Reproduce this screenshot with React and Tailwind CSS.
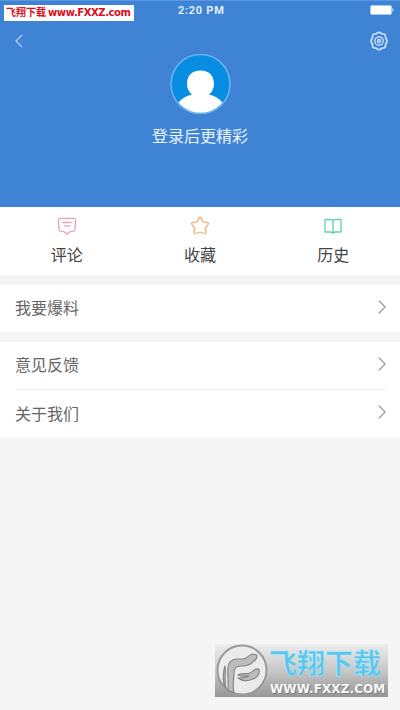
const TABS = [
  { label: '评论', icon: <CommentIcon /> },
  { label: '收藏', icon: <StarIcon /> },
  { label: '历史', icon: <BookIcon /> },
];

const MENU_GROUPS = [['我要爆料'], ['意见反馈', '关于我们']];

function CommentIcon() {
  return (
    <svg className="w-5 h-5" viewBox="0 0 20 20" fill="none" stroke="#eca0b5" strokeWidth="1.300" strokeLinejoin="round">
      <path d="M3.200 2.300h13.600a1.800 1.800 0 0 1 1.800 2L18 13.500q-.1 1.300-1.500 1.600L13 15.700 10 18 7 15.700l-3.500-.6Q2.100 14.800 2 13.500L1.400 4.300a1.800 1.800 0 0 1 1.800-2Z" />
      <path d="M5.500 6.500h9M7 9.800h6.500" />
    </svg>
  );
}

function StarIcon() {
  return (
    <svg className="w-5 h-5" viewBox="0 0 20 20" fill="none" stroke="#f5b273" strokeWidth="1.300" strokeLinejoin="round">
      <path d="M10 1.500Q10.700 1.500 11.200 2.500L12.900 5.800L17.500 6.700Q19.200 7.300 18 8.700L15.300 12L16 16.300Q16 18 14.300 17.500L10 16L5.700 17.500Q4 18 4 16.300L4.700 12L2 8.700Q.8 7.300 2.500 6.700L7.100 5.800L8.800 2.500Q9.300 1.500 10 1.500Z" />
    </svg>
  );
}

function BookIcon() {
  return (
    <svg className="w-5 h-5" viewBox="0 0 20 20" fill="none" stroke="#66d2aa" strokeWidth="1.300" strokeLinejoin="round">
      <path d="M10 4.700Q8.800 3.500 7 3.500H2V16h5.500q1.700 0 2.500 1 .8-1 2.500-1H18V3.500h-5q-1.800 0-3 1.200Z" />
      <path d="M10 4.700v13" />
    </svg>
  );
}

function GearIcon() {
  return (
    <svg className="w-[18px] h-5" viewBox="0 0 18 20" fill="none" stroke="#cfe5fb">
      <path
        strokeWidth="1.600"
        strokeLinejoin="round"
        d="M7 2.200q2-1.600 4 0l.9.700 1.600.1q2 .3 2 2.500l.1 1.500.8 1.200q1.200 1.800 0 3.600l-.8 1.200-.1 1.500q0 2.200-2 2.500l-1.600.1-.9.700q-2 1.600-4 0l-.9-.7-1.600-.1q-2-.3-2-2.500l-.1-1.500-.8-1.200q-1.200-1.800 0-3.600l.8-1.200.1-1.500q0-2.200 2-2.500l1.600-.1Z"
      />
      <circle cx="9" cy="10" r="4.200" strokeWidth="1.300" />
      <circle cx="9" cy="10" r="1.500" strokeWidth="1.500" />
    </svg>
  );
}

function Chevron() {
  return (
    <svg className="w-2 h-[14px]" viewBox="0 0 8 14" fill="none" stroke="#a3a3a3" strokeWidth="1.500">
      <path d="M1 .8 7 7 1 13.200" />
    </svg>
  );
}

function Avatar() {
  return (
    <svg className="w-[61px] h-[62px]" viewBox="0 0 61 62">
      <defs>
        <clipPath id="avatar">
          <circle cx="30.500" cy="31" r="30" />
        </clipPath>
      </defs>
      <circle cx="30.500" cy="31" r="29.500" fill="#078ee2" />
      <g clipPath="url(#avatar)" fill="#fff">
        <path d="M30.500 17.500c8.500 0 13.500 5 13.500 13.500 0 4.500-2 8-5 10.500 6 1.500 10 4 13 7.500v13H9V49c3-3.500 7-6 13-7.500-3-2.500-5-6-5-10.500 0-8.500 5-13.500 13.500-13.500Z" />
      </g>
      <circle cx="30.500" cy="31" r="29.500" fill="none" stroke="#69b1f1" strokeWidth="1.600" />
    </svg>
  );
}

function Header() {
  return (
    <header className="relative h-[207px] bg-[#3f83d5] text-white border-t border-[#5b97df]">
      {/* status bar */}
      <div className="relative h-5">
        <span className="absolute left-[178px] top-[2px] text-[11px] leading-4 font-semibold tracking-[0.750px] whitespace-nowrap text-[#eaf3fc]">
          2:20 PM
        </span>
        <div className="absolute right-[6px] top-1 flex items-center">
          <div className="w-[22px] h-[10px] rounded-[2px] bg-white border border-[#a8cbf2]" />
          <div className="w-[2px] h-1 rounded-r bg-[#8dbaec]" />
        </div>
        <div className="absolute left-1 top-1 w-[130px] h-4 bg-white flex items-center pl-[2px] text-[#d90d1b] font-bold whitespace-nowrap">
          <span className="w-[42px] text-[10px] leading-4">飞翔下载</span>
          <span className="font-['DejaVu_Sans','Noto_Sans_CJK_SC',sans-serif] text-[10px] leading-4 tracking-[-0.400px]">www.FXXZ.com</span>
        </div>
      </div>

      <div className="h-[32px] flex items-start justify-between pl-[15px] pr-3">
        <svg className="mt-[13px] w-2 h-[14px]" viewBox="0 0 8 14" fill="none" stroke="#b5d6f8" strokeWidth="1.200">
          <path d="M7 1 1 7l6 6" />
        </svg>
        <div className="mt-[10px]">
          <GearIcon />
        </div>
      </div>

      <div className="flex flex-col items-center">
        <Avatar />
        <p className="mt-[10px] text-[16px] leading-6 text-[#eaf4ff]">登录后更精彩</p>
      </div>
    </header>
  );
}

function MenuRow({ label, divided }) {
  return (
    <div className="bg-white pl-[15px] pr-[14px]">
      <div className={`flex items-center justify-between ${divided ? 'h-[49px] border-t border-[#f0f0f0]' : 'h-[47px]'}`}>
        <span className="pt-px text-[16px] leading-6 text-[#666666]">{label}</span>
        <div className="pb-1">
          <Chevron />
        </div>
      </div>
    </div>
  );
}

function DownloadBadge() {
  return (
    <div className="absolute left-[215px] top-[644px] w-[173px] h-[53px] flex bg-linear-to-b from-[#ededed] via-[#c8c8c8] to-[#969696]">
      <svg className="w-[54px] h-[53px] shrink-0" viewBox="0 0 54 53">
        <circle cx="27" cy="26" r="24.500" fill="#ebebeb" stroke="#9a9a9a" strokeWidth="2" />
        <g fill="#bdbdbd" stroke="#868686" strokeWidth="1.200" strokeLinejoin="round">
          <path d="M13 46C14 38 12 31 13 23c1-6 4-8 9-8h6c5 0 5-4 9-5l5 1c0 3-1 5-3 6-3 4-8 5-13 5-5 0-7 2-7 7 0 6-2 12 0 20Z" />
          <path d="M9 41c-1-6-1-13 1-19 1 7-1 14 1 22Z" />
          <path d="M23 31c4-3 8 0 12-2 3-1 4-5 9-4 1 5-2 9-6 10-5 2-11 2-15-1 4 0 8 0 11-2-4 0-7 1-11-1Z" />
        </g>
      </svg>
      <div className="relative flex-1">
        <span className="absolute left-0 top-1 text-[28px] leading-[34px] font-bold whitespace-nowrap text-[#59c6ed] [-webkit-text-stroke:0.500px_#b5e6f7]">
          飞翔下载
        </span>
        <span className="absolute left-[1px] top-[38px] font-['DejaVu_Sans','Noto_Sans_CJK_SC',sans-serif] text-[12px] leading-[14px] font-bold tracking-[0.100px] whitespace-nowrap text-[#f7f7f7] [text-shadow:1px_1px_0_#808080]">
          WWW.FXXZ.COM
        </span>
      </div>
    </div>
  );
}

export default function App() {
  return (
    <div className="relative w-[400px] h-[710px] overflow-hidden bg-[#f5f5f5] font-['Roboto','Noto_Sans_CJK_SC',sans-serif]">
      <Header />

      <nav className="grid grid-cols-3 h-[68px] bg-white">
        {TABS.map((tab) => (
          <div key={tab.label} className="flex flex-col items-center pt-[9px]">
            {tab.icon}
            <span className="mt-2 text-[16px] leading-6 text-[#444444]">{tab.label}</span>
          </div>
        ))}
      </nav>

      {MENU_GROUPS.map((group) => (
        <section key={group[0]} className="mt-[10px]">
          {group.map((label, i) => (
            <MenuRow key={label} label={label} divided={i > 0} />
          ))}
        </section>
      ))}

      <DownloadBadge />
    </div>
  );
}
